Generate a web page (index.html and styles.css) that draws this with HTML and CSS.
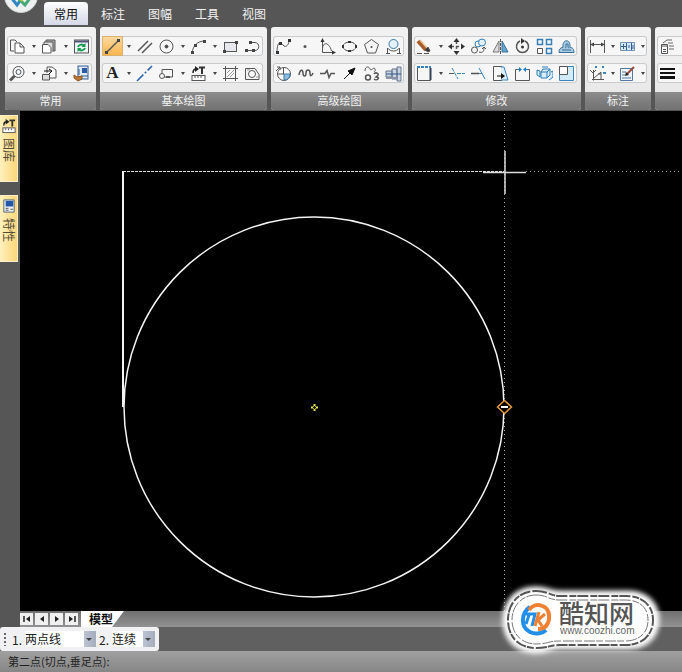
FILE: index.html
```html
<!DOCTYPE html>
<html lang="zh-CN">
<head>
<meta charset="utf-8">
<title>CAD</title>
<link rel="stylesheet" href="styles.css">
</head>
<body>
  <header class="menu">
    <button class="logo" aria-label="菜单">
      <svg viewBox="0 0 34 34"><circle cx="17" cy="17" r="16.500" fill="#eef1f0" stroke="#c9cdcd"/><path d="M6 17l7 9 5-7" stroke="#2f86c0" stroke-width="3"/><path d="M14 19l7 7 8-11" stroke="#45a875" stroke-width="3"/><path d="M17 22l4-7 3 3" stroke="#b9c832" stroke-width="3"/></svg>
    </button>
    <nav class="tabs">
      <a href="#" class="tab active">常用</a>
      <a href="#" class="tab">标注</a>
      <a href="#" class="tab">图幅</a>
      <a href="#" class="tab">工具</a>
      <a href="#" class="tab">视图</a>
    </nav>
  </header>

  <div class="ribbon">
    <section class="panel">
      <div class="rows">
        <div class="tools">
          <button class="tool" aria-label="复制"><svg viewBox="0 0 17 17"><path d="M5 13H1.500V2H6l2 2"/><path d="M6 5h5l4 4v6H6zM11 5v4h4" fill="#fff"/></svg></button>
          <button class="caret" aria-label="更多"></button>
          <button class="tool" aria-label="粘贴"><svg viewBox="0 0 17 17"><path d="M5 5V2h9v11h-3" fill="#aaa"/><path d="M3 7V4h9v9" fill="#ddd"/><path d="M1.500 6.500H7l3 3V15H1.500z" fill="#fff"/></svg></button>
          <button class="caret" aria-label="更多"></button>
          <button class="tool" aria-label="刷新"><svg viewBox="0 0 17 17"><rect x="1.500" y="2" width="14" height="13" fill="#eef4f8"/><path d="M2 3.500h13" stroke="#557" stroke-width="2"/><path d="M5 9c1-3 5-3 6-1M12 10c-1 3-5 3-6 1" stroke="#149a4c" stroke-width="2"/><path d="M12.500 5v4h-4zM4.500 14v-4h4z" fill="#149a4c" stroke="none"/></svg></button>
        </div>
        <div class="tools">
          <button class="tool" aria-label="缩放"><svg viewBox="0 0 17 17"><circle cx="9.500" cy="7" r="5.500" fill="#f4f8fb"/><circle cx="9.500" cy="7" r="2.500"/><path d="M5.500 11L1 15.500" stroke-width="3"/></svg></button>
          <button class="caret" aria-label="更多"></button>
          <button class="tool" aria-label="块"><svg viewBox="0 0 17 17"><path d="M6 8V2h5l4 3v8H9" fill="#fff"/><path d="M1.500 9.500h7V15h-7z" fill="#ddd"/><path d="M3 6h7M8 4l3 2-3 3" stroke="#111"/></svg></button>
          <button class="caret" aria-label="更多"></button>
          <button class="tool" aria-label="特性匹配"><svg viewBox="0 0 17 17"><rect x="5" y="1" width="10" height="13" fill="#dfeaf7" stroke="#345a92"/><rect x="9" y="3" width="5" height="5" fill="#2d5ba0" stroke="none"/><path d="M8 11h7M6 4v6" stroke="#345a92"/><path d="M1 10l3 2 5-1v3l-4 2-4-3z" fill="#b97838" stroke="#8a5420"/></svg></button>
        </div>
      </div>
      <h2>常用</h2>
    </section>

    <section class="panel">
      <div class="rows">
        <div class="tools">
          <button class="tool selected" aria-label="直线"><svg viewBox="0 0 17 17"><path d="M3 14L14 3" stroke-width="1.500"/><path d="M1 13h3v3H1zM13 1h3v3h-3z" fill="#444" stroke="none"/></svg></button>
          <button class="caret" aria-label="更多"></button>
          <button class="tool" aria-label="平行线"><svg viewBox="0 0 17 17"><path d="M2 13L12 3M6 15L16 5" stroke-width="1.500"/></svg></button>
          <button class="tool" aria-label="圆"><svg viewBox="0 0 17 17"><circle cx="8.500" cy="8.500" r="6.500"/><circle cx="8.500" cy="8.500" r="1.500" fill="#444"/></svg></button>
          <button class="caret" aria-label="更多"></button>
          <button class="tool" aria-label="圆弧"><svg viewBox="0 0 17 17"><path d="M2 15C3 8 7 3 15 3"/><path d="M1 13h3v3H1zM13 2h3v3h-3zM4 6h3v3H4z" fill="#444" stroke="none"/></svg></button>
          <button class="caret" aria-label="更多"></button>
          <button class="tool" aria-label="矩形"><svg viewBox="0 0 17 17"><rect x="2.500" y="4.500" width="12" height="9" fill="#e6e8ee"/><path d="M1 12h3v3H1zM13 3h3v3h-3z" fill="#444" stroke="none"/></svg></button>
          <button class="tool" aria-label="多段线"><svg viewBox="0 0 17 17"><path d="M7 4.500h4c5 0 5 8 0 8H3"/><path d="M5 3h3v3H5zM1 11h3v3H1zM8 11h3v3H8z" fill="#444" stroke="none"/></svg></button>
        </div>
        <div class="tools">
          <button class="tool letter" aria-label="文字">A</button>
          <button class="caret" aria-label="更多"></button>
          <button class="tool" aria-label="中心线"><svg viewBox="0 0 17 17"><path d="M1 16L16 1" stroke="#2a62b0" stroke-width="1.500" stroke-dasharray="9 2 2 2"/></svg></button>
          <button class="tool" aria-label="局部放大"><svg viewBox="0 0 17 17"><path d="M4 8V4.500h10.500V12H6"/><circle cx="4" cy="11" r="2.500"/><path d="M8 12h4" stroke-width="2"/></svg></button>
          <button class="caret" aria-label="更多"></button>
          <button class="tool" aria-label="图库"><svg viewBox="0 0 17 17"><path d="M3 8c0-3 1-4 3-4" stroke="#222" stroke-width="1.500"/><path d="M5 1l4 3-4 3z" fill="#222" stroke="none"/><path d="M9 2.500h6M12 2v7" stroke="#333" stroke-width="2"/><rect x="2" y="10.500" width="13" height="5" fill="#fff"/><path d="M5 11v2M8 11v2M11 11v2"/></svg></button>
          <button class="caret" aria-label="更多"></button>
          <button class="tool" aria-label="剖面线"><svg viewBox="0 0 17 17"><path d="M3.500 1v15M13.500 1v15M1 3.500h15M1 13.500h15"/><path d="M5 8l3-3M5 12l7-7M8 12l4-4" stroke="#999"/></svg></button>
          <button class="tool" aria-label="填充"><svg viewBox="0 0 17 17"><path d="M1.500 3.500H11l4 6v5H1.500z"/><circle cx="8" cy="9" r="3.500" fill="#fff"/><path d="M3 5l3 0M12 12h2" stroke="#999"/></svg></button>
        </div>
      </div>
      <h2>基本绘图</h2>
    </section>

    <section class="panel">
      <div class="rows">
        <div class="tools">
          <button class="tool" aria-label="样条"><svg viewBox="0 0 17 17"><path d="M2 15C2 2 6 4 8 7s6 1 6-5"/><path d="M1 13h3v3H1zM13 1h3v3h-3zM4 4h3v3H4z" fill="#333" stroke="none"/></svg></button>
          <button class="tool" aria-label="点"><svg viewBox="0 0 17 17"><circle cx="8" cy="8.500" r="1.500" fill="#555" stroke="none"/></svg></button>
          <button class="tool" aria-label="公式曲线"><svg viewBox="0 0 17 17"><path d="M3.500 2v12.500H15"/><path d="M3.500 10c1-7 7-5 9 3"/><path d="M3.500 0l2 4h-4zM17 14.500l-4-2v4z" fill="#333" stroke="none"/></svg></button>
          <button class="tool" aria-label="椭圆"><svg viewBox="0 0 17 17"><ellipse cx="8.500" cy="8.500" rx="6.500" ry="4.500"/><path d="M1 7h2v3H1zM14 7h2v3h-2zM7 3h3v2H7zM7 12h3v2H7z" fill="#333" stroke="none"/></svg></button>
          <button class="tool" aria-label="正多边形"><svg viewBox="0 0 17 17"><path d="M8.500 1.500l7 5-3 8.500h-8l-3-8.500z"/><circle cx="8.500" cy="9" r="1" fill="#444" stroke="none"/></svg></button>
          <button class="tool" aria-label="圆弧过渡"><svg viewBox="0 0 17 17"><circle cx="8.500" cy="6" r="4.500" stroke="#377aa6" fill="#e5f1f8"/><path d="M2.500 16v-6c3 4 9 4 12 0v6M1 15.500h4M12 15.500h4"/></svg></button>
        </div>
        <div class="tools">
          <button class="tool" aria-label="局部"><svg viewBox="0 0 17 17"><circle cx="9" cy="9" r="6.500" fill="#fff"/><path d="M9 9h6c0 3-2 6-6 6z" fill="#8fbde0" stroke="#377aa6"/><path d="M8.500 3v6M3 9h6M1 6l4-4M2 2h3v3"/></svg></button>
          <button class="tool" aria-label="波浪线"><svg viewBox="0 0 17 17"><path d="M2 10c1-6 4-6 4-2s3 4 3 0 4-4 4 0 2 3 3 0" stroke-width="1.500"/></svg></button>
          <button class="tool" aria-label="双折线"><svg viewBox="0 0 17 17"><path d="M1 8.500h5l2-3 2 7 2-4h4" stroke-width="1.500"/></svg></button>
          <button class="tool" aria-label="箭头"><svg viewBox="0 0 17 17"><path d="M3 14l6-6" stroke="#111"/><path d="M14 3l-3 7-4-4z" fill="#111" stroke="#111"/></svg></button>
          <button class="tool" aria-label="云线"><svg viewBox="0 0 17 17"><path d="M2 6c0-5 4-5 5-2s4-3 5 0-1 2-1 3"/><path d="M11 9c1-2 5-1 4 1 0 1-1 1-2 2 2 0 3 1 2 2s-3 1-4 0" stroke-width="1.500"/><circle cx="5" cy="12.500" r="2.500" stroke-width="1.500"/></svg></button>
          <button class="tool" aria-label="孔轴"><svg viewBox="0 0 17 17"><path d="M1 6h6v6H1zM7 4h5v10H7zM12 2h4v14h-4z" fill="#c9d5e2" stroke="#677589"/><path d="M1 9h15" stroke="#34598b"/><path d="M1 13h11" stroke="#8a93a5" stroke-width="2"/></svg></button>
        </div>
      </div>
      <h2>高级绘图</h2>
    </section>

    <section class="panel">
      <div class="rows">
        <div class="tools">
          <button class="tool" aria-label="删除"><svg viewBox="0 0 17 17"><path d="M2 3l8 9" stroke="#a85b2a" stroke-width="4"/><path d="M4 2l8 9" stroke="#e8c898" stroke-width="1.500"/><path d="M9 12l3-3 2 4-2 1z" fill="#333"/><path d="M1 15.500h14" stroke-dasharray="5 2"/></svg></button>
          <button class="caret" aria-label="更多"></button>
          <button class="tool" aria-label="平移"><svg viewBox="0 0 17 17"><path d="M8.500 3v11M3 8.500h11" stroke-width="1.500" stroke-dasharray="3 2"/><path d="M8.500 0l3 4h-6zM8.500 17l3-4h-6zM0 8.500l4-3v6zM17 8.500l-4-3v6z" fill="#333" stroke="none"/></svg></button>
          <button class="tool" aria-label="平移复制"><svg viewBox="0 0 17 17"><circle cx="4.500" cy="12" r="3"/><circle cx="8" cy="6" r="3" stroke="#3480b8"/><circle cx="12" cy="4.500" r="3.500" stroke="#3480b8" fill="#e2f0fa"/><path d="M9 14c3 1 5 0 5-4M12 11l2-2 2 2"/></svg></button>
          <button class="tool" aria-label="镜像"><svg viewBox="0 0 17 17"><path d="M7 3v11H1z" fill="#ddd" stroke="#777"/><path d="M10 3v11h6z" fill="#67a7d3" stroke="#34719c"/><path d="M8.500 1v15" stroke-dasharray="3 1"/></svg></button>
          <button class="tool" aria-label="旋转"><svg viewBox="0 0 17 17"><path d="M6 3a6 6 0 1 0 5 0" stroke-width="1.500"/><path d="M7 0l4 3-4 3z" fill="#333" stroke="none"/><circle cx="8.500" cy="9" r="1.500" fill="#333" stroke="none"/></svg></button>
          <button class="tool" aria-label="阵列"><svg viewBox="0 0 17 17"><path d="M1.500 1.500h5v5h-5zM10.500 1.500h5v5h-5zM10.500 10.500h5v5h-5z" stroke="#397fb3" stroke-width="1.500" fill="#eef7fd"/><path d="M1.500 10.500h5v5h-5z" fill="#fff"/></svg></button>
          <button class="tool" aria-label="等距线"><svg viewBox="0 0 17 17"><path d="M1 14.500h15c0-5-3-5-4-5 1-9-8-9-7 0-3 0-4 2-4 5z" fill="#a8cde5" stroke="#3a6e94"/><path d="M4 12h9M7 10c1 0 1-1 1-4h2c0 3 0 4 1 4" stroke="#3a6e94"/></svg></button>
        </div>
        <div class="tools">
          <button class="tool" aria-label="裁剪"><svg viewBox="0 0 17 17"><path d="M1.500 2v13.500h13V2"/><path d="M1 2h14" stroke="#3282c4" stroke-width="2" stroke-dasharray="3 1"/><path d="M14.500 3v12" stroke="#345" stroke-width="2"/></svg></button>
          <button class="caret" aria-label="更多"></button>
          <button class="tool" aria-label="打断"><svg viewBox="0 0 17 17"><path d="M1 8.500h5"/><path d="M4 3l6 11M9 8.500h8" stroke="#3b84b9" stroke-dasharray="4 1"/></svg></button>
          <button class="tool" aria-label="延伸"><svg viewBox="0 0 17 17"><path d="M1 8.500h8" stroke-width="1.500"/><path d="M9 8.500h3M9 3l6 11" stroke="#3b84b9"/></svg></button>
          <button class="tool" aria-label="拉伸"><svg viewBox="0 0 17 17"><path d="M10 1.500H1.500v14H10"/><path d="M9 2h3l4 13H9" stroke="#3b84b9" fill="#dceefa"/><path d="M5 11h5" stroke="#111"/><path d="M9 8l4 3-4 3z" fill="#111" stroke="none"/></svg></button>
          <button class="tool" aria-label="打散"><svg viewBox="0 0 17 17"><path d="M4 4.500H1.500v11h14v-11H13"/><path d="M3 4.500h4M10 4.500h4" stroke="#287dbd"/><path d="M5 2l3 2.500L5 7zM12 2L9 4.500 12 7z" fill="#287dbd" stroke="none"/></svg></button>
          <button class="tool" aria-label="分解"><svg viewBox="0 0 17 17"><path d="M5 7l2-3h7v6l-3 3H5zM5 7h6v6M11 7l3-3M1 5l3 1v6l-3-2zM6 2h6M15 7l2-1v6l-4 3" stroke="#287dbd" fill="#d9edfa"/></svg></button>
          <button class="tool" aria-label="比例缩放"><svg viewBox="0 0 17 17"><path d="M1.500 1.500h14v14h-14z" fill="#d3eaf7" stroke="#3b84b9"/><path d="M1.500 1.500h8v8h-8z" fill="#fff"/></svg></button>
        </div>
      </div>
      <h2>修改</h2>
    </section>

    <section class="panel narrow">
      <div class="rows">
        <div class="tools">
          <button class="tool" aria-label="尺寸标注"><svg viewBox="0 0 17 17"><path d="M1.500 2v13M15.500 2v13M3 6.500h11"/><path d="M1 6.500l4-2v4zM16 6.500l-4-2v4z" fill="#444" stroke="none"/></svg></button>
          <button class="caret" aria-label="更多"></button>
          <button class="tool" aria-label="公差"><svg viewBox="0 0 17 17"><path d="M1.500 4.500h14v8h-14z" fill="#d8e7f6" stroke="#6f93b8"/><path d="M7.500 5v7M12.500 5v7M2 8.500h5M4.500 6v5M10 7v3M14 7v4" stroke="#315f91"/></svg></button>
          <button class="caret" aria-label="更多"></button>
        </div>
        <div class="tools">
          <button class="tool" aria-label="坐标标注"><svg viewBox="0 0 17 17"><path d="M4.500 5v10.500M3 14.500h12M1 5l3 3 3-3M5 13l7-6v8M9 9h3"/><path d="M6 1h2v2H6zM13 1h2v2h-2zM14 7h3v2h-3z" fill="#3b84b9" stroke="none"/></svg></button>
          <button class="caret" aria-label="更多"></button>
          <button class="tool" aria-label="编辑标注"><svg viewBox="0 0 17 17"><path d="M1.500 3.500h12v12h-12z" fill="#eef5fc" stroke="#5477a0"/><path d="M3 7h4M3 10h3M3 13h9" stroke="#5477a0"/><path d="M8 9l7-7" stroke="#9a4a3c" stroke-width="2"/><path d="M6 11l4-1-3-3z" fill="#222" stroke="none"/></svg></button>
          <button class="caret" aria-label="更多"></button>
        </div>
      </div>
      <h2>标注</h2>
    </section>

    <section class="panel last">
      <div class="rows">
        <div class="tools">
          <button class="tool" aria-label="图层"><svg viewBox="0 0 17 17"><path d="M4 5l4-3h5M9 5h5M10 8h5M10 11h5" stroke="#666"/><path d="M2.500 6.500h6v9h-6z" fill="#fff"/><path d="M3 8h5M4 11.500h3M4 13.500h3"/></svg></button>
          <button class="caret" aria-label="更多"></button>
        </div>
        <div class="tools">
          <button class="tool" aria-label="线宽"><svg viewBox="0 0 17 17"><path d="M1 4h15M1 8h15" stroke="#111" stroke-width="2"/><path d="M1 12.500h15" stroke="#111" stroke-width="3"/></svg></button>
          <button class="caret" aria-label="更多"></button>
        </div>
      </div>
      <h2></h2>
    </section>
  </div>

  <main class="workspace">
    <aside class="dock">
      <button class="dock-tab">
        <svg viewBox="0 0 17 17"><path d="M3 8c0-3 1-4 3-4" stroke="#222" stroke-width="1.500"/><path d="M5 1l4 3-4 3z" fill="#222" stroke="none"/><path d="M9 2.500h6M12 2v7" stroke="#333" stroke-width="2"/><rect x="2" y="10.500" width="13" height="5" fill="#fff"/><path d="M5 11v2M8 11v2M11 11v2"/></svg>
        <span>图库</span>
      </button>
      <button class="dock-tab">
        <svg viewBox="0 0 17 17"><path d="M3 2h11v13H3z" fill="#e8edf4" stroke="#567"/><path d="M5 3h8v6H5z" fill="#2456a8" stroke="none"/><path d="M5 11h3M5 13h3M10 12h3"/></svg>
        <span>特性</span>
      </button>
    </aside>
    <svg class="drawing" role="img" aria-label="绘图区">
      <circle cx="294" cy="296" r="190" stroke="#f4f4f4" stroke-width="1.500"/>
      <path d="M103 60v236" stroke="#f4f4f4" stroke-width="2"/>
      <path d="M103 60.500h381" stroke="#ddd" stroke-dasharray="3 1"/>
      <path d="M506 60.500h4000" stroke="#aaa" stroke-dasharray="1 3"/>
      <path d="M484.500 3v4000" stroke="#aaa" stroke-dasharray="1 3"/>
      <path d="M463 61.500h43M485 40v43" stroke="#ddd" stroke-width="1.500"/>
      <path d="M291 296.500h7M294.500 293v7" stroke="#e6e640" stroke-width="2"/>
      <path d="M293 296.500h3M294.500 295v3" stroke="#000"/>
      <path d="M484.500 289.500l7 6.500-7 6.500-7-6.500z" fill="#000" stroke="#e59a3c" stroke-width="1.500"/>
      <path d="M481 296h7" stroke="#fff" stroke-width="2"/>
    </svg>
  </main>

  <div class="sheets">
    <button class="nav-btn" aria-label="首页"><svg viewBox="0 0 12 12"><path d="M3 3v6" stroke-width="1.500"/><path d="M9 3v6L5 6z" fill="#222" stroke="none"/></svg></button>
    <button class="nav-btn" aria-label="上一页"><svg viewBox="0 0 12 12"><path d="M8 3v6L4 6z" fill="#222" stroke="none"/></svg></button>
    <button class="nav-btn" aria-label="下一页"><svg viewBox="0 0 12 12"><path d="M4 3v6l4-3z" fill="#222" stroke="none"/></svg></button>
    <button class="nav-btn" aria-label="末页"><svg viewBox="0 0 12 12"><path d="M9 3v6" stroke-width="1.500"/><path d="M3 3v6l4-3z" fill="#222" stroke="none"/></svg></button>
    <button class="sheet">模型</button>
  </div>

  <div class="options">
    <form class="option-bar">
      <span class="grip"></span>
      <label for="lineType">1.</label>
      <span class="combo combo-wide">
        <select id="lineType"><option>两点线</option></select>
      </span>
      <label for="lineMode">2.</label>
      <span class="combo">
        <select id="lineMode"><option>连续</option></select>
      </span>
    </form>
  </div>

  <footer class="status">第二点(切点,垂足点):</footer>

  <svg class="watermark" viewBox="0 0 172 80">
    <defs>
      <filter id="soft" x="-10%" y="-20%" width="120%" height="140%"><feGaussianBlur stdDeviation="2.500"/></filter>
    </defs>
    <path class="halo" filter="url(#soft)" d="M40 8c12 0 14 4 24 4h68c18 0 30 11 30 28s-12 28-30 28H64c-10 0-12 4-24 4C20 72 8 59 8 40S20 8 40 8z"/>
    <path class="edge" d="M40 11c12 0 14 5 24 5h66c16 0 27 9 27 24s-11 25-27 25H64c-10 0-12 3-24 3-17 0-28-11-28-28s11-29 28-29z"/>
    <path class="edge thin" d="M40 15c11 0 13 5 23 5h66c14 0 23 7 23 20s-9 21-23 21H63c-10 0-12 3-23 3-14 0-24-10-24-24s10-25 24-25z"/>
    <!-- ring: blue on the left, orange on the right -->
    <path d="M34 27c-9 6-10 20 0 25 6 3 13 1 16-2" stroke="#218fea" stroke-width="4"/>
    <path d="M33 30c5-8 19-6 20 5 1 9-4 14-11 14" stroke="#f08032" stroke-width="4"/>
    <path d="M30 34h9l-3 12M33 35l-3 9" stroke="#218fea" stroke-width="3"/>
    <path d="M43 32l-4 14M49 34l-7 6 4 6" stroke="#f08032" stroke-width="3"/>
    <text x="63" y="43" class="brand">酷知网</text>
    <text x="64" y="54" class="site">www.coozhi.com</text>
  </svg>
</body>
</html>
```
FILE: styles.css
```css
:root {
  --frame: #565656;
  --ink: #555;
  --tool: 21px;
}

* {
  box-sizing: border-box;
}

body {
  margin: 0;
  min-height: 100vh;
  display: flex;
  flex-direction: column;
  position: relative;
  overflow: hidden;
  background: var(--frame);
  font-family: "Noto Sans CJK SC", sans-serif;
  font-size: 12px;
  color: #222;
}

button, select {
  font: inherit;
  color: inherit;
  border: 0;
  padding: 0;
  margin: 0;
  background: none;
}

svg {
  fill: none;
  stroke: var(--ink);
}

/* top menu */
.menu {
  height: 27px;
  display: flex;
  align-items: flex-end;
  padding: 0 4px 2px;
  overflow: hidden;
}

.logo {
  width: 34px;
  height: 34px;
  margin: 0 6px 12px 0;
  flex: none;
}

.logo svg {
  display: block;
}

.tabs {
  display: flex;
  gap: 3px;
}

.tab {
  padding: 0 10px;
  line-height: 23px;
  color: #f2f2f2;
  text-decoration: none;
  border-radius: 4px 4px 0 0;
}

.tab.active {
  background: linear-gradient(#fff, #d5d9e8);
  color: #111;
}

/* ribbon */
.ribbon {
  display: flex;
  gap: 4px;
  height: 84px;
  padding: 0 0 1px 5px;
  overflow: hidden;
}

.panel {
  flex: none;
  display: flex;
  flex-direction: column;
  justify-content: space-between;
  background: linear-gradient(#f2f2f2, #e6e6e6);
  border-radius: 3px;
  overflow: hidden;
}

.panel.last {
  flex: 1 0 40px;
}

.rows {
  display: flex;
  flex-direction: column;
  gap: 7px;
  padding: 9px 4px 0 2px;
}

.tools {
  display: flex;
  height: 20px;
  background: #f6f6f6;
  border-radius: 3px;
  box-shadow: inset 0 0 0 1px #c8cbce;
}

.tool {
  width: var(--tool);
  display: grid;
  place-items: center;
}

.tool + .tool {
  margin-left: 1px;
}

.tool svg {
  width: 17px;
  height: 17px;
}

.tool.selected {
  background: linear-gradient(#fbd9a0, #f9b54e);
  border: 1px solid #d9b271;
}

.tool.letter {
  font: bold 17px/20px "Liberation Serif", serif;
}

.caret {
  width: 11px;
  display: grid;
  place-items: center;
}

.caret::before {
  content: "";
  border: 2px solid transparent;
  border-top: 3px solid #444;
  border-bottom: 0;
}

.narrow .caret {
  width: 9px;
}

.panel h2 {
  height: 18px;
  margin: 0;
  background: linear-gradient(#8c8c8c, #727272);
  color: #f4f4f4;
  font-size: 11px;
  font-weight: 400;
  line-height: 17px;
  text-align: center;
}

/* workspace */
.workspace {
  flex: 1;
  display: flex;
  background: #000;
}

.dock {
  width: 20px;
  display: flex;
  flex-direction: column;
  gap: 13px;
  padding: 4px 2px 0 0;
  background: var(--frame);
}

.dock-tab {
  height: 67px;
  display: flex;
  flex-direction: column;
  align-items: center;
  gap: 4px;
  padding-top: 2px;
  background: linear-gradient(90deg, #fff0bd, #fbd777);
  border: 1px solid #fbeec6;
  border-left: 0;
  color: #554c38;
}

.dock-tab svg {
  width: 16px;
  height: 16px;
}

.dock-tab span {
  writing-mode: vertical-rl;
  text-orientation: sideways;
  line-height: 14px;
}

.drawing {
  flex: 1;
  min-width: 0;
}

/* sheet tabs */
.sheets {
  display: flex;
  align-items: center;
  gap: 2px;
  height: 16px;
  border-left: 20px solid var(--frame);
  background: linear-gradient(#707070, #929292);
}

.nav-btn {
  width: 13px;
  height: 12px;
  background: #f0f0f0;
  display: grid;
  place-items: center;
}

.nav-btn svg {
  width: 12px;
  height: 12px;
  stroke: #222;
}

.sheet {
  height: 16px;
  margin-left: 1px;
  padding: 0 11px 0 8px;
  background: #fff;
  clip-path: polygon(0 0, 100% 0, 72% 100%, 0 100%);
  color: #111;
  font-weight: 700;
  line-height: 16px;
}

/* command options */
.options {
  height: 24px;
  display: flex;
  background: #606060;
}

.option-bar {
  display: flex;
  align-items: center;
  gap: 3px;
  padding: 0 4px;
  border-radius: 3px;
  background: #f1f1f3;
}

.grip {
  width: 2px;
  height: 13px;
  margin-right: 3px;
  background: repeating-linear-gradient(#666 0 2px, transparent 2px 4px);
}

.combo {
  display: flex;
  position: relative;
  width: 43px;
  background: #fff;
}

.combo-wide {
  width: 71px;
}

.combo::after {
  content: "";
  position: absolute;
  right: 4px;
  top: 7px;
  border: 3px solid transparent;
  border-top-color: #444;
  border-bottom: 0;
  pointer-events: none;
}

.combo select {
  flex: 1;
  min-width: 0;
  height: 16px;
  appearance: none;
  line-height: 16px;
  background: linear-gradient(90deg, #bcc3d1, #a5adbd) right / 12px 100% no-repeat;
}

/* status line */
.status {
  height: 21px;
  padding-left: 8px;
  background: linear-gradient(#a0a0a0, #868686);
  font-size: 11px;
  line-height: 20px;
}

.watermark {
  position: absolute;
  right: 14px;
  bottom: 12px;
  width: 172px;
  height: 80px;
  pointer-events: none;
}

.halo {
  fill: #fff;
  stroke: #fff;
  stroke-width: 3px;
}

.edge {
  fill: #fff;
  stroke: #555;
  stroke-width: 2px;
  stroke-dasharray: 11 2 7 1;
}

.edge.thin {
  stroke: #777;
  stroke-width: 1px;
}

.brand {
  font-size: 25px;
  font-weight: 500;
  fill: #555;
  stroke: none;
}

.site {
  font-family: "Liberation Sans", sans-serif;
  font-size: 10px;
  fill: #666;
  stroke: none;
}
```
